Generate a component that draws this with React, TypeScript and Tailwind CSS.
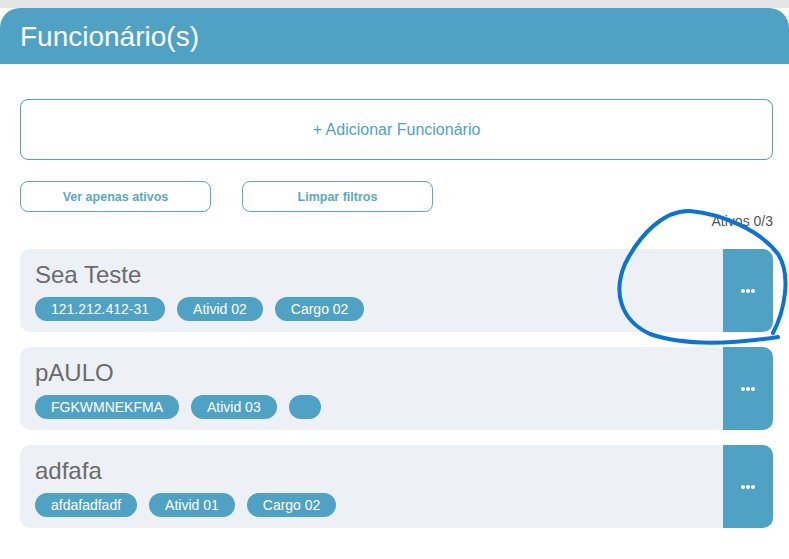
import { MoreHorizontal } from 'lucide-react';

interface Funcionario {
  id: number; nome: string; tags: string[];
}

const funcionarios: Funcionario[] = [
  { id: 1, nome: 'Sea Teste', tags: ['121.212.412-31', 'Ativid 02', 'Cargo 02'] },
  { id: 2, nome: 'pAULO', tags: ['FGKWMNEKFMA', 'Ativid 03', ''] },
  { id: 3, nome: 'adfafa', tags: ['afdafadfadf', 'Ativid 01', 'Cargo 02'] },
];

function Dots() {
  return (
    <svg width="14" height="4" viewBox="0 0 14 4" fill="#fff">
      <circle cx="2" cy="2" r="2" />
      <circle cx="7" cy="2" r="2" />
      <circle cx="12" cy="2" r="2" />
    </svg>
  );
}

export default function App() {
  return (
    <div className="relative w-[789px] h-[559px] bg-white overflow-hidden font-['Liberation_Sans',Arial,sans-serif]">
      <div className="h-2 bg-[#e4e4e4]" />
      <div className="h-14 bg-[#4fa2c4] rounded-t-[20px] flex items-center px-5">
        <h1 className="text-[28px] text-white leading-none pt-[1px]">Funcionário(s)</h1>
      </div>

      <div className="pl-5 pr-4 pt-[35px]">
        <button className="w-full h-[61px] border border-[#4fa2c4] rounded-lg text-[#4fa2c4] text-[16px] flex items-center justify-center">
          + Adicionar Funcionário
        </button>

        <div className="flex gap-[31px] mt-[21px]">
          <button className="w-[191px] h-[31px] pt-[2px] border border-[#5aa8c6] rounded-lg text-[#5aa8c6] text-[12.5px] font-bold">Ver apenas ativos</button>
          <button className="w-[191px] h-[31px] pt-[2px] border border-[#5aa8c6] rounded-lg text-[#5aa8c6] text-[12.5px] font-bold">Limpar filtros</button>
        </div>

        <p className="text-right text-[14px] text-[#555] leading-4 mt-[1px]">Ativos 0/3</p>

        <div className="flex flex-col gap-[15px] mt-[20px]">
          {funcionarios.map(f => (
            <div key={f.id} className="flex h-[83px] rounded-[10px] overflow-hidden bg-[#edf0f5]">
              <div className="flex-1 pl-[15px] pt-3">
                <p className="text-[24px] leading-[25px] text-[#6b6b6b] pt-[1px]">{f.nome}</p>
                <div className="flex gap-3 mt-[10px]">
                  {f.tags.map((t, i) => (
                    <span key={i} className="h-6 px-4 min-w-[32px] rounded-full bg-[#4fa2c4] text-white text-[14px] leading-6">{t}</span>
                  ))}
                </div>
              </div>
              <button className="w-[50px] bg-[#4fa2c4] flex items-center justify-center" title="Opções">
                <Dots />
              </button>
            </div>
          ))}
        </div>
      </div>

      <svg className="absolute inset-0 pointer-events-none" width="789" height="559" viewBox="0 0 789 559" fill="none">
        <path
          d="M 773 333 C 784 312, 792 276, 778 254 C 760 230, 722 214, 690 211 C 664 210, 640 234, 625 264 C 613 292, 620 320, 650 334 C 690 348, 745 342, 778 337"
          stroke="#0a73d5" strokeWidth="4" strokeLinecap="round" strokeLinejoin="round"
        />
      </svg>
      <span className="hidden"><MoreHorizontal /></span>
    </div>
  );
}
